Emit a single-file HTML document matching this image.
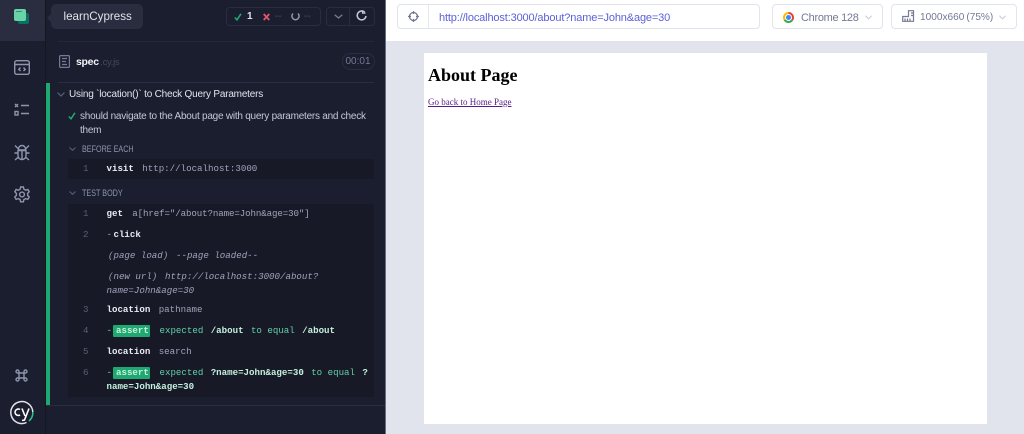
<!DOCTYPE html>
<html><head><meta charset="utf-8">
<style>
html,body{margin:0;padding:0;width:1024px;height:434px;overflow:hidden;background:#1b1e2e}
body{position:relative;font-family:"Liberation Sans",sans-serif}
.a{position:absolute;white-space:nowrap}
.m{font-family:"Liberation Mono",monospace;font-size:9.13px;line-height:12px;color:#a0a4bd}
.b{font-weight:bold;color:#e9ebf3}
.n{color:#5a5f7a}
.g{color:#62d0a8}
.gb{color:#c4f0de;font-weight:bold}
.i{font-style:italic}
.s{margin-left:8.4px}
.t{margin-left:7.4px}
.u{font-size:10px;color:#c5c8d8;line-height:14px;letter-spacing:-.24px}
.l{font-size:9px;line-height:12px;color:#9095ad;transform:scaleX(.8);transform-origin:0 0}
.as{color:#c4f0de;font-weight:bold}
svg{position:absolute;overflow:visible}
</style></head><body>
<!-- sidebar -->
<div class="a" style="left:0;top:0;width:45px;height:434px;background:#1b1e2e"></div>
<div class="a" style="left:45px;top:0;width:1px;height:434px;background:#141622"></div>
<div class="a" style="left:0;top:0;width:45px;height:41px;background:#2a2d40"></div>
<div class="a" style="left:18px;top:13px;width:11px;height:11px;background:#0b6f63;border-radius:2px"></div>
<div class="a" style="left:14px;top:9px;width:12px;height:12px;background:#69d3a7;border-radius:2px"></div>
<div class="a" style="left:16px;top:11px;width:6px;height:1px;background:#2f8f78"></div>

<svg style="left:14px;top:60px" width="16" height="16" viewBox="0 0 16 16" fill="none" stroke="#9095ad" stroke-width="1.4"><rect x=".7" y=".7" width="14.6" height="13.6" rx="2"/><path d="M1 4.500h14M6.500 7.500 4.800 9.300l1.700 1.700M9.500 7.500l1.700 1.800L9.500 11"/></svg>
<svg style="left:14px;top:103px" width="16" height="14" viewBox="0 0 16 14" fill="none" stroke="#9095ad" stroke-width="1.4"><path d="M1 1l3 3M4 1 1 4M7 2.500h8M7 10.500h8"/><rect x="1" y="8.500" width="3" height="3.500"/></svg>
<svg style="left:14px;top:144px" width="16" height="17" viewBox="0 0 16 17" fill="none" stroke="#9095ad" stroke-width="1.4"><path d="M4.500 5a3.500 3.500 0 0 1 7 0v1h-7zM4 6.500h8v5a4 4 0 0 1-8 0zM8 6.500V15M1 1.500 4.500 5M15 1.500 11.500 5M.5 9H4M15.500 9H12M1 16l3.500-3M15 16l-3.500-3"/></svg>
<svg style="left:14px;top:186px" width="16" height="17" viewBox="0 0 16 17" fill="none" stroke="#9095ad" stroke-width="1.4"><path d="M6.600 1h2.800l.5 2.200 1.800 1 2.200-.7 1.300 2.300-1.600 1.600v2l1.600 1.600-1.300 2.300-2.200-.7-1.800 1-.5 2.200H6.600l-.5-2.200-1.800-1-2.200.7L.8 11l1.600-1.600v-2L.8 5.800l1.300-2.300 2.200.7 1.800-1z"/><circle cx="8" cy="8.500" r="2.400"/></svg>
<svg style="left:15px;top:369px" width="13" height="13" viewBox="0 0 13 13" fill="none" stroke="#9095ad" stroke-width="1.400"><path d="M4 4h5v5H4zM4 4H2.500A1.500 1.500 0 1 1 4 2.500zM9 4V2.500A1.500 1.500 0 1 1 10.500 4zM9 9h1.500A1.500 1.500 0 1 1 9 10.500zM4 9v1.500A1.500 1.500 0 1 1 2.500 9z"/></svg>
<svg style="left:10px;top:400px" width="24" height="25" viewBox="0 0 24 25" fill="none"><path d="M16.500 22.500A11 11 0 1 1 22.800 12" stroke="#e1e3ed" stroke-width="1.500"/><path d="M22.800 12a11 11 0 0 1-3.800 9" stroke="#1fc98e" stroke-width="1.500"/><path d="M10 9.500a3.200 3.200 0 1 0 0 5.400" stroke="#fff" stroke-width="1.600"/><path d="M12 8.500l3 7.500M19 8.500 14.500 20l-2.500.5" stroke="#fff" stroke-width="1.600"/></svg>

<!-- tooltip -->
<svg style="left:47px;top:12px" width="6" height="12" viewBox="0 0 6 12"><path d="M6 0 0 5.800 6 12z" fill="#2a2d40"/></svg>
<div class="a" style="left:51px;top:4px;width:92px;height:25px;background:#2a2d40;border-radius:5px"></div>
<div class="a" style="left:63.500px;top:9px;font-size:11.600px;line-height:16px;color:#e1e3ed">learnCypress</div>

<!-- top stats -->
<div class="a" style="left:226px;top:7px;width:93px;height:17px;border:1px solid #2a2d40;border-radius:4px"></div>
<svg style="left:234px;top:13px" width="8" height="8" viewBox="0 0 8 8" fill="none" stroke="#1fa971" stroke-width="1.600"><path d="M.800 4.500 3 6.800 7 .8"/></svg>
<div class="a" style="left:247px;top:11px;font-size:10px;line-height:12px;color:#e1e3ed;font-weight:bold">1</div>
<svg style="left:263px;top:13px" width="7" height="8" viewBox="0 0 7 8" fill="none" stroke="#e45770" stroke-width="1.700"><path d="M.7 1l5.600 6M6.300 1 .7 7"/></svg>
<div class="a" style="left:275px;top:11px;font-size:10px;line-height:12px;color:#4a4f69">--</div>
<svg style="left:291px;top:12px" width="9" height="10" viewBox="0 0 9 10" fill="none" stroke="#9095ad" stroke-width="1.500"><path d="M2 1.500A3.600 3.600 0 1 0 7 1.500"/></svg>
<div class="a" style="left:304px;top:11px;font-size:10px;line-height:12px;color:#4a4f69">--</div>
<div class="a" style="left:326px;top:7px;width:47px;height:17px;border:1px solid #2a2d40;border-radius:4px"></div>
<div class="a" style="left:349px;top:8px;width:1px;height:17px;background:#2a2d40"></div>
<svg style="left:334px;top:14px" width="9" height="5" viewBox="0 0 9 5" fill="none" stroke="#747994" stroke-width="1.300"><path d="M.7.700 4.500 4 8.300.7"/></svg>
<svg style="left:356px;top:10px" width="11" height="11" viewBox="0 0 11 11" fill="none" stroke="#c5c8d8" stroke-width="1.500"><path d="M8.900 2.500A4.400 4.400 0 1 0 10 6"/><path d="M6.500.2v3h3" stroke-width="1.200"/></svg>

<div class="a" style="left:58px;top:41px;width:316px;height:1px;background:#24273a"></div>
<div class="a" style="left:58px;top:82px;width:316px;height:1px;background:#2a2d40"></div>
<svg style="left:59px;top:55px" width="11" height="13" viewBox="0 0 11 13" fill="none" stroke="#747994" stroke-width="1.200"><rect x=".6" y=".6" width="9.800" height="11.800" rx="1"/><path d="M3 3.500h5M3 6.500h4M3 9.500h5"/></svg>
<div class="a" style="left:76px;top:55px;font-size:10.500px;line-height:14px;font-weight:bold;color:#f3f4fa;letter-spacing:-.3px">spec<span style="font-weight:normal;color:#434861;letter-spacing:-.3px;font-size:9.500px;margin-left:1.500px">.cy.js</span></div>
<div class="a" style="left:341.500px;top:53px;width:31px;height:15px;border:1px solid #2a2d40;border-radius:9px;color:#747994;font-size:10px;line-height:15px;text-align:center">00:01</div>

<!-- green bar -->
<div class="a" style="left:46px;top:83px;width:4px;height:322px;background:#1fa971"></div>
<div class="a" style="left:46px;top:405px;width:339px;height:1px;background:#2a2d40"></div>
<svg style="left:57px;top:92px" width="8" height="5" viewBox="0 0 8 5" fill="none" stroke="#5a5f7a" stroke-width="1.200"><path d="M.6.600 4 4 7.400.6"/></svg>
<div class="a" style="left:69px;top:88px;font-size:10px;line-height:14px;letter-spacing:-.2px;color:#e1e3ed">Using `location()` to Check Query Parameters</div>
<svg style="left:68px;top:112px" width="8" height="8" viewBox="0 0 8 8" fill="none" stroke="#1fa971" stroke-width="1.500"><path d="M.800 4.500 3 6.800 7 .8"/></svg>
<div class="a u" style="left:80px;top:110px">should navigate to the About page with query parameters and check</div>
<div class="a u" style="left:80px;top:124px">them</div>

<svg style="left:69px;top:147px" width="7" height="4" viewBox="0 0 7 4" fill="none" stroke="#5a5f7a" stroke-width="1.100"><path d="M.5.500 3.500 3.300 6.500.5"/></svg>
<div class="a l" style="left:82px;top:143px">BEFORE EACH</div>
<div class="a" style="left:68px;top:159px;width:306px;height:20px;background:#171926"></div>
<div class="a m n" style="left:83px;top:163px">1</div>
<div class="a m" style="left:106.500px;top:163px"><span class="b">visit</span><span class="s">http://localhost:3000</span></div>

<svg style="left:69px;top:191px" width="7" height="4" viewBox="0 0 7 4" fill="none" stroke="#5a5f7a" stroke-width="1.100"><path d="M.5.500 3.500 3.300 6.500.5"/></svg>
<div class="a l" style="left:82px;top:187px">TEST BODY</div>
<div class="a" style="left:68px;top:204px;width:306px;height:193px;background:#171926"></div>

<div class="a m n" style="left:83px;top:208px">1</div>
<div class="a m" style="left:106.500px;top:208px"><span class="b">get</span><span style="margin-left:9.300px;letter-spacing:-.1px">a[href="/about?name=John&amp;age=30"]</span></div>
<div class="a m n" style="left:83px;top:229px">2</div>
<div class="a m" style="left:106.500px;top:229px"><span style="color:#a0a4bd">-</span><span class="b" style="margin-left:1.500px">click</span></div>
<div class="a m i" style="left:108px;top:250px">(page load)</div>
<div class="a m i" style="left:176px;top:250px">--page loaded--</div>
<div class="a m i" style="left:108px;top:271px">(new url)</div>
<div class="a m i" style="left:165px;top:271px">http://localhost:3000/about?</div>
<div class="a m i" style="left:106.500px;top:285px">name=John&amp;age=30</div>
<div class="a m n" style="left:83px;top:304px">3</div>
<div class="a m" style="left:106.500px;top:304px"><span class="b">location</span><span class="s">pathname</span></div>
<div class="a m n" style="left:83px;top:325px">4</div>
<div class="a m g" style="left:106.500px;top:325px">-</div>
<div class="a" style="left:113px;top:325px;width:37px;height:12px;background:#1fa971;border-radius:1px"></div>
<div class="a m as" style="left:116px;top:325px">assert</div>
<div class="a m g" style="left:159.500px;top:325px">expected<span class="t gb">/about</span><span class="t">to equal</span><span class="t gb">/about</span></div>
<div class="a m n" style="left:83px;top:346px">5</div>
<div class="a m" style="left:106.500px;top:346px"><span class="b">location</span><span class="s">search</span></div>
<div class="a m n" style="left:83px;top:367px">6</div>
<div class="a m g" style="left:106.500px;top:367px">-</div>
<div class="a" style="left:113px;top:367px;width:37px;height:12px;background:#1fa971;border-radius:1px"></div>
<div class="a m as" style="left:116px;top:367px">assert</div>
<div class="a m g" style="left:159.500px;top:367px">expected<span class="t gb">?name=John&amp;age=30</span><span class="t">to equal</span><span class="t gb">?</span></div>
<div class="a m gb" style="left:106.500px;top:381px">name=John&amp;age=30</div>

<!-- right -->
<div class="a" style="left:385px;top:0;width:1px;height:434px;background:#6a6e85"></div>
<div class="a" style="left:386px;top:0;width:638px;height:434px;background:#e1e3ed"></div>
<div class="a" style="left:386px;top:0;width:638px;height:41px;background:#fff"></div>
<div class="a" style="left:397px;top:4px;width:361px;height:23px;border:1px solid #e1e3ed;border-radius:4px;background:#fff"></div>
<div class="a" style="left:428px;top:5px;width:1px;height:23px;background:#e8e9f0"></div>
<svg style="left:408px;top:11px" width="11" height="11" viewBox="0 0 11 11" fill="none" stroke="#747994" stroke-width="1.300"><circle cx="5.500" cy="5.500" r="4"/><path d="M5.500 0v3M5.500 8v3M0 5.500h3M8 5.500h3"/></svg>
<div class="a" style="left:439px;top:11px;font-size:11px;line-height:14px;color:#5c60d8;letter-spacing:-.14px">http://localhost:3000/about?name=John&amp;age=30</div>

<div class="a" style="left:772px;top:4px;width:109px;height:23px;border:1px solid #e1e3ed;border-radius:4px"></div>
<div class="a" style="left:783px;top:11.500px;width:11px;height:11px;border-radius:50%;background:conic-gradient(#ea4335 0 33%,#34a853 33% 66%,#fbbc04 66% 100%)"></div>
<div class="a" style="left:786px;top:14.500px;width:5px;height:5px;border-radius:50%;background:#4285f4;box-shadow:0 0 0 1px #fff"></div>
<div class="a" style="left:801px;top:11px;font-size:11px;line-height:14px;color:#747994;letter-spacing:-.3px">Chrome 128</div>
<svg style="left:865px;top:15px" width="7" height="5" viewBox="0 0 8 5" fill="none" stroke="#c5c8d8" stroke-width="1.100"><path d="M.5.500 4 4 7.500.5"/></svg>

<div class="a" style="left:891px;top:4px;width:124px;height:23px;border:1px solid #e1e3ed;border-radius:4px"></div>
<svg style="left:902px;top:10px" width="12" height="12" viewBox="0 0 12 12" fill="none" stroke="#747994" stroke-width="1.200"><path d="M6.500.7h5v10.600H.7V6.500h5.800zM3 8.500v2.500M5.500 8.500v2.500M8 8.500v2.500M9 3h2.500M9 5.500h2.500"/></svg>
<div class="a" style="left:920px;top:11px;font-size:10.100px;line-height:14px;color:#747994">1000x660<span style="margin-left:2px">(75%)</span></div>
<svg style="left:999px;top:15px" width="7" height="5" viewBox="0 0 8 5" fill="none" stroke="#c5c8d8" stroke-width="1.100"><path d="M.5.500 4 4 7.500.5"/></svg>

<!-- AUT -->
<div class="a" style="left:424px;top:53px;width:563px;height:371px;background:#fff"></div>
<div class="a" style="left:428px;top:65px;font-family:'Liberation Serif',serif;font-size:18px;line-height:20px;font-weight:bold;color:#000">About Page</div>
<a class="a" style="left:428px;top:96px;font-family:'Liberation Serif',serif;font-size:9px;line-height:12px;color:#551a8b;text-decoration:underline">Go back to Home Page</a>
</body></html>
